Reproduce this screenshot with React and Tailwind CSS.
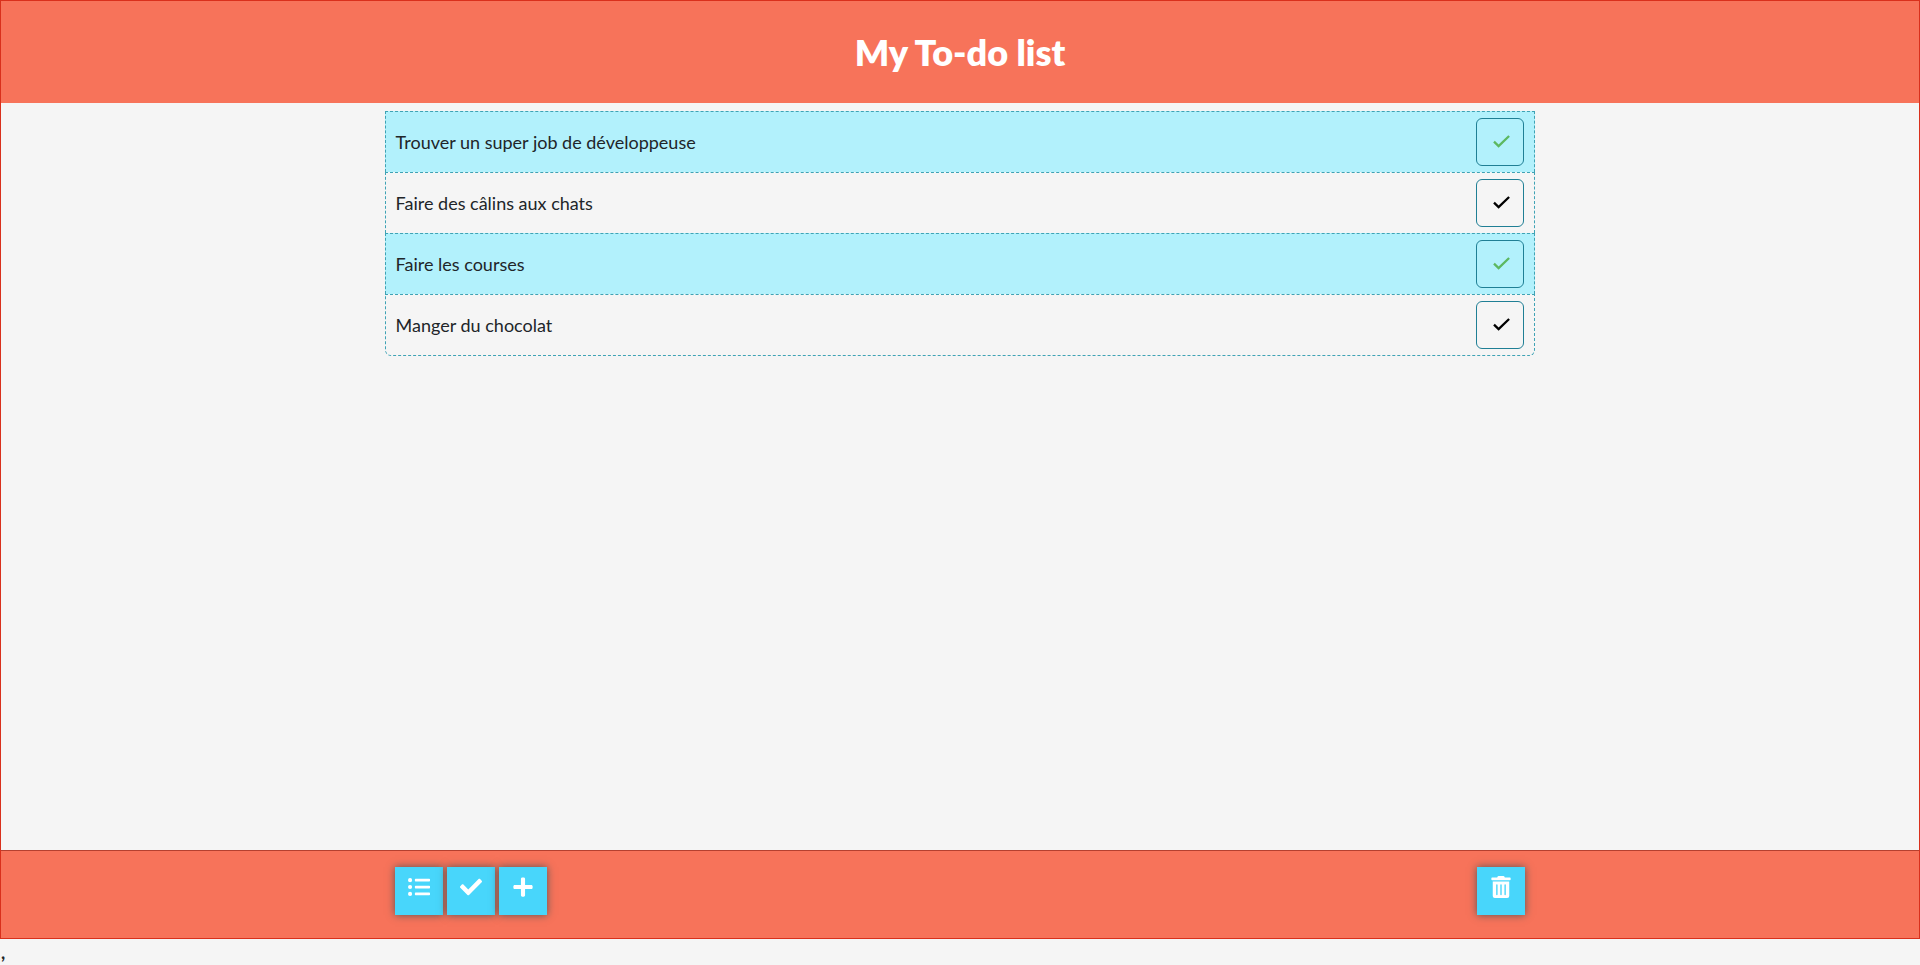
import { useState } from "react";
import { FaCheck, FaListUl, FaPlus, FaTrashAlt } from "react-icons/fa";

const initialTasks = [
  { id: 1, label: "Trouver un super job de développeuse", done: true },
  { id: 2, label: "Faire des câlins aux chats", done: false },
  { id: 3, label: "Faire les courses", done: true },
  { id: 4, label: "Manger du chocolat", done: false },
];

function CheckMark() {
  return (
    <svg viewBox="0 0 17 13" className="h-[13px] w-[17px]" fill="none" stroke="currentColor" strokeWidth="2.3" aria-hidden="true">
      <path d="M1 6.6 5.6 11.1 16.1 1" />
    </svg>
  );
}

function Task({ task, onToggle }) {
  return (
    <li
      className={`flex items-center justify-between border border-b-0 border-dashed border-[#3fa3b5] px-2.5 py-1.5 last:rounded-b-md last:border-b ${
        task.done ? "bg-[#b2f1fc]" : ""
      }`}
    >
      <span>{task.label}</span>
      <button
        type="button"
        aria-label={`Basculer : ${task.label}`}
        aria-pressed={task.done}
        onClick={() => onToggle(task.id)}
        className={`flex size-12 items-center justify-center rounded-md border border-[#1f7f95] pb-px pl-0.5 ${
          task.done ? "text-[#5cb860]" : "text-black"
        }`}
      >
        <CheckMark />
      </button>
    </li>
  );
}

function ToolButton({ label, icon: Icon, onClick }) {
  return (
    <button
      type="button"
      aria-label={label}
      onClick={onClick}
      className="flex size-12 justify-center bg-[#48d6fb] pt-2 text-white shadow-[0_0_8px_#555]"
    >
      <Icon className="size-6 p-px" />
    </button>
  );
}

export default function App() {
  const [tasks, setTasks] = useState(initialTasks);
  const [onlyDone, setOnlyDone] = useState(false);

  const toggle = (id) =>
    setTasks(tasks.map((t) => (t.id === id ? { ...t, done: !t.done } : t)));
  const add = () =>
    setTasks([...tasks, { id: Date.now(), label: "Nouvelle tâche", done: false }]);
  const visible = onlyDone ? tasks.filter((t) => t.done) : tasks;

  return (
    <div className="flex min-h-screen flex-col bg-[#f5f5f5] font-['Lato',sans-serif] text-lg/[26px] text-[#212529]">
      <div className="flex grow flex-col border border-[#d9301c]">
        <header className="bg-[#f7735a] py-7 text-center text-white">
          <h1 className="text-4xl/[46px] font-extrabold">My To-do list</h1>
        </header>
        <main className="grow pt-2">
          <ul className="mx-auto w-3/5">
            {visible.map((task) => (
              <Task key={task.id} task={task} onToggle={toggle} />
            ))}
          </ul>
        </main>
        <footer className="border-t border-[#b5402f] bg-[#f7735a] pt-4 pb-[23px]">
          <div className="mx-auto flex w-3/5 justify-between px-2.5">
            <div className="flex gap-1">
              <ToolButton label="Toutes les tâches" icon={FaListUl} onClick={() => setOnlyDone(false)} />
              <ToolButton label="Tâches terminées" icon={FaCheck} onClick={() => setOnlyDone(true)} />
              <ToolButton label="Ajouter une tâche" icon={FaPlus} onClick={add} />
            </div>
            <ToolButton
              label="Supprimer les tâches terminées"
              icon={FaTrashAlt}
              onClick={() => setTasks(tasks.filter((t) => !t.done))}
            />
          </div>
        </footer>
      </div>
      <span className="pl-px font-bold">,</span>
    </div>
  );
}
